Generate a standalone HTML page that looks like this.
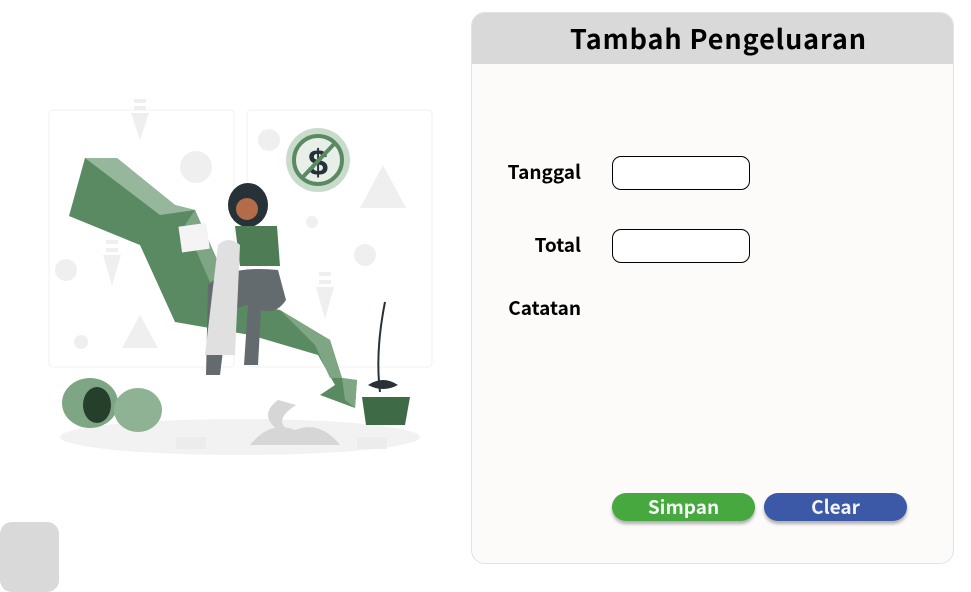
<!DOCTYPE html>
<html><head><style>
body{margin:0;width:971px;height:580px;background:#fff;position:relative;overflow:hidden;font-family:"Noto Sans CJK SC","Liberation Sans",sans-serif;}
.panel{position:absolute;left:471px;top:12px;width:481px;height:550px;background:#fcfbfa;border:1px solid #e2e2e4;border-radius:14px;overflow:hidden;}
.hdr{height:51px;background:#d9d9d9;text-align:center;font-weight:bold;font-size:27px;line-height:50px;color:#000;letter-spacing:0.9px;padding-left:12px;}
.lbl{position:absolute;font-weight:bold;font-size:19px;line-height:24px;color:#000;text-align:right;width:120px;}
.inp{position:absolute;left:140px;width:136px;height:32px;border:1px solid #000;border-radius:9px;background:#fff;}
.btn{position:absolute;top:480px;width:143px;height:28px;border-radius:15px;color:#f4f4f4;font-weight:bold;font-size:19px;text-align:center;line-height:27px;box-shadow:0 3px 3px rgba(0,0,0,.3);}
.corner{position:absolute;left:0;top:522px;width:59px;height:70px;background:#d9d9d9;border-radius:12px;}
</style></head><body>
<svg style="position:absolute;left:0;top:0" width="470" height="580">
<g fill="none" stroke="#f0f0f0" stroke-width="1"><rect x="49" y="110" width="185" height="257" rx="4"/><rect x="247" y="110" width="185" height="257" rx="4"/></g>
<g fill="#efefef">
<rect x="134" y="99" width="12" height="4"/><rect x="134" y="106" width="12" height="4"/><polygon points="131,113 149,113 140,140"/>
<rect x="106" y="240" width="12" height="4"/><rect x="106" y="248" width="12" height="4"/><polygon points="103,255 121,255 112,286"/>
<rect x="319" y="272" width="12" height="4"/><rect x="319" y="280" width="12" height="4"/><polygon points="316,287 334,287 325,319"/>
<circle cx="196" cy="167" r="16"/><circle cx="269" cy="140" r="11"/><circle cx="66" cy="270" r="11"/><circle cx="81" cy="342" r="7"/><circle cx="365" cy="255" r="11"/><circle cx="312" cy="222" r="6"/>
<polygon points="140,315 122,348 158,348"/><polygon points="383,165 360,208 406,208"/>
</g>
<ellipse cx="240" cy="437" rx="180" ry="18" fill="#f2f2f2"/>
<polygon points="85,158 117,158 175,205 195,210 235,300 280,310 330,340 342,378 357,380 355,408 320,395 335,385 318,355 250,335 175,322 140,245 69,216" fill="#5a8a62"/>
<polygon points="85,158 117,158 175,205 195,210 160,215" fill="#97b79d"/>
<polygon points="195,210 235,300 220,305 185,225" fill="#7ea584"/>
<polygon points="280,310 330,340 342,378 330,378 315,345" fill="#7ea584"/>
<polygon points="342,378 357,380 355,408 345,400" fill="#7ea584"/>
<circle cx="318" cy="160" r="32" fill="#c9dccc"/><circle cx="318" cy="160" r="24" fill="#e8efe9" stroke="#5a8a62" stroke-width="4"/>
<text x="318" y="175" font-size="36" font-weight="bold" text-anchor="middle" fill="#263238" font-family="Liberation Sans">$</text>
<line x1="302" y1="178" x2="335" y2="143" stroke="#5a8a62" stroke-width="4"/>
<ellipse cx="248" cy="205" rx="20" ry="22" fill="#263238"/>
<circle cx="247" cy="209" r="11" fill="#b36b4a"/>
<path d="M235 226 h42 l3 40 h-40z" fill="#4e7d55"/>
<path d="M208 285 q20 -20 70 -15 l8 30 q-10 15 -25 10 l-3 55 h-14 l4 -60 l-20 5 l-8 65 h-14 z" fill="#636b6f"/>
<path d="M218 245 q10 -10 22 0 l-5 110 h-30z" fill="#e0e0e0"/>
<rect x="180" y="225" width="28" height="26" fill="#f4f4f4" transform="rotate(-8 192 237)"/>
<ellipse cx="90" cy="403" rx="28" ry="25" fill="#7ea584"/><ellipse cx="97" cy="405" rx="14" ry="18" fill="#263f2c"/>
<ellipse cx="138" cy="410" rx="24" ry="22" fill="#8eb293"/>
<polygon points="362,397 410,397 405,425 366,425" fill="#3e6a46"/>
<path d="M380 392 q-5 -40 5 -90" stroke="#263238" stroke-width="2" fill="none"/>
<path d="M368 385 q15 -10 30 0 q-15 8 -30 0" fill="#263238"/>
<g fill="#d6d6d6"><path d="M250 445 q20 -25 45 -15 q25 -10 45 15z"/><path d="M278 400 q-20 15 0 30 h10 q-15 -10 8 -25z"/></g>
<g fill="#ececec"><rect x="176" y="437" width="30" height="12"/><rect x="357" y="437" width="30" height="12"/></g>
</svg>
<div class="corner"></div>
<div class="panel">
<div class="hdr">Tambah Pengeluaran</div>
<div class="lbl" style="left:-11px;top:147px">Tanggal</div>
<div class="inp" style="top:143px"></div>
<div class="lbl" style="left:-11px;top:220px">Total</div>
<div class="inp" style="top:216px"></div>
<div class="lbl" style="left:-11px;top:283px">Catatan</div>
<div class="btn" style="left:140px;background:#46a83f">Simpan</div>
<div class="btn" style="left:292px;background:#3c59a7">Clear</div>
</div>
</body></html>
